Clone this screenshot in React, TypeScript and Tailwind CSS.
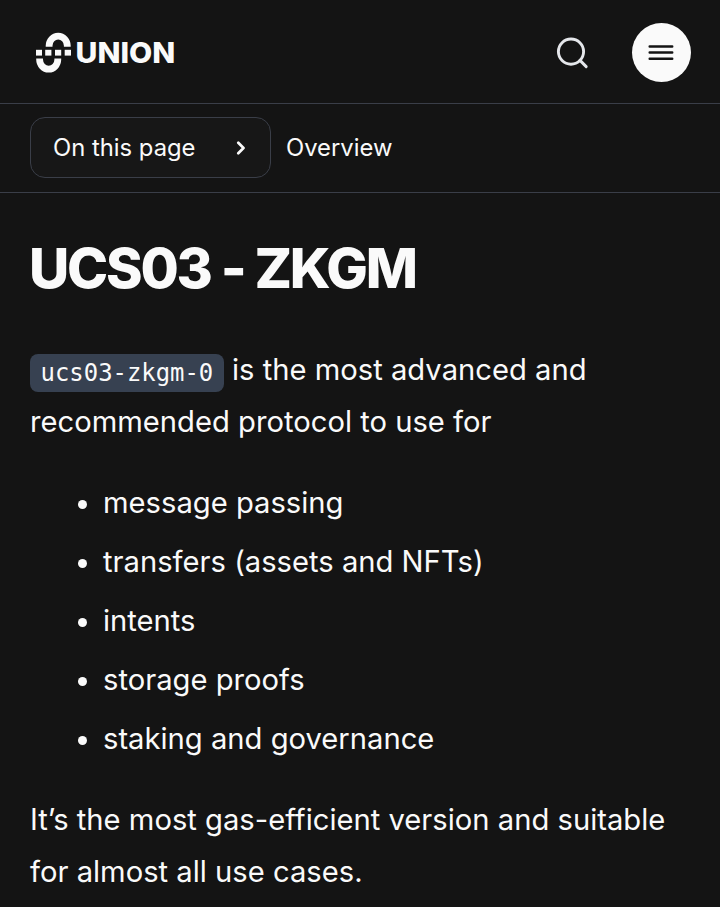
import React from 'react';

const features = [
  'message passing',
  'transfers (assets and NFTs)',
  'intents',
  'storage proofs',
  'staking and governance',
];

const Logo = () => {
  return (
    <svg width="140" height="40" viewBox="0 0 140 40" aria-label="Union" className="overflow-visible">
      <g fill="none" stroke="#fafafa" strokeWidth="6.8">
        <path d="M14.1 13.8v-1a8.9 9.4 0 0 1 18.2 0v1" />
        <path d="M4.6 25.6v1a8.9 9.4 0 0 0 18.2 0v-1" />
      </g>
      <g fill="#fafafa">
        <rect x="1" y="16.8" width="6" height="5.8" />
        <rect x="10.2" y="16.8" width="6.2" height="5.8" />
        <rect x="20" y="16.8" width="6.2" height="5.8" />
        <rect x="29.7" y="16.8" width="6.3" height="5.8" />
        <text
          x="40.6"
          y="30.2"
          textLength="99.8"
          lengthAdjust="spacingAndGlyphs"
          className="font-['Inter',sans-serif] text-[29px] font-extrabold"
        >
          UNION
        </text>
      </g>
    </svg>
  );
};

const Header = () => {
  return (
    <header className="flex h-[104px] items-center justify-between border-b border-[#3a3e48] pt-[2px] pl-[35px] pr-[29px]">
      <Logo />
      <div className="flex items-center gap-[43px]">
        <button aria-label="Search">
          <svg width="34" height="34" viewBox="0 0 34 34" fill="none" stroke="#e5e7eb" strokeWidth="2.9">
            <circle cx="16" cy="15.6" r="12.6" />
            <path d="M25 24.4l6.2 6.2" strokeLinecap="round" />
          </svg>
        </button>
        <button
          aria-label="Menu"
          className="flex size-[59px] items-center justify-center rounded-full bg-[#fafafa]"
        >
          <svg
            width="27"
            height="19"
            viewBox="0 0 27 19"
            fill="none"
            stroke="#141414"
            strokeWidth="2.5"
            strokeLinecap="round"
          >
            <path d="M1.7 3.4h22.5M1.7 9.6h22.5M1.7 15.8h22.5" />
          </svg>
        </button>
      </div>
    </header>
  );
};

const PageNav = () => {
  return (
    <nav className="flex h-[89px] items-start gap-[15px] border-b border-[#3a3e48] px-[30px] pt-[13px] text-[23.8px]">
      <button className="flex h-[61px] w-[241px] items-center justify-between rounded-[15px] border border-[#3a3e48] bg-[#171717] pl-[22px] pr-[24px]">
        <span>On this page</span>
        <svg
          width="10"
          height="14"
          viewBox="0 0 10 14"
          fill="none"
          stroke="#fafafa"
          strokeWidth="2.7"
          strokeLinecap="round"
          strokeLinejoin="round"
        >
          <path d="M2.3 1.8L7.5 7l-5.2 5.2" />
        </svg>
      </button>
      <span className="leading-[61px]">Overview</span>
    </nav>
  );
};

const App = () => {
  return (
    <div className="h-[907px] overflow-hidden bg-[#141414] font-['Inter',sans-serif] text-[#fafafa]">
      <Header />
      <PageNav />
      <main className="px-[30px] pt-[42px] text-[29.2px] leading-[51.7px]">
        <h1 className="-ml-px text-[55.4px] leading-[66px] font-extrabold tracking-[-2.2px]">UCS03 - ZKGM</h1>
        <p className="mt-[43.4px]">
          <code className="relative top-px rounded-[8px] bg-[#374151] px-[10.6px] py-[5px] font-['DejaVu_Sans_Mono',monospace] text-[23.9px] leading-none">
            ucs03-zkgm-0
          </code>{' '}
          is the most advanced and recommended protocol to use for
        </p>
        <ul className="mt-[29.6px] list-disc pl-[73px]">
          {features.map((feature) => (
            <li key={feature} className="mb-[7.3px]">
              {feature}
            </li>
          ))}
        </ul>
        <p className="mt-[29px]">
          It’s the most gas-efficient version and suitable for almost all use cases.
        </p>
      </main>
    </div>
  );
};

export default App;
